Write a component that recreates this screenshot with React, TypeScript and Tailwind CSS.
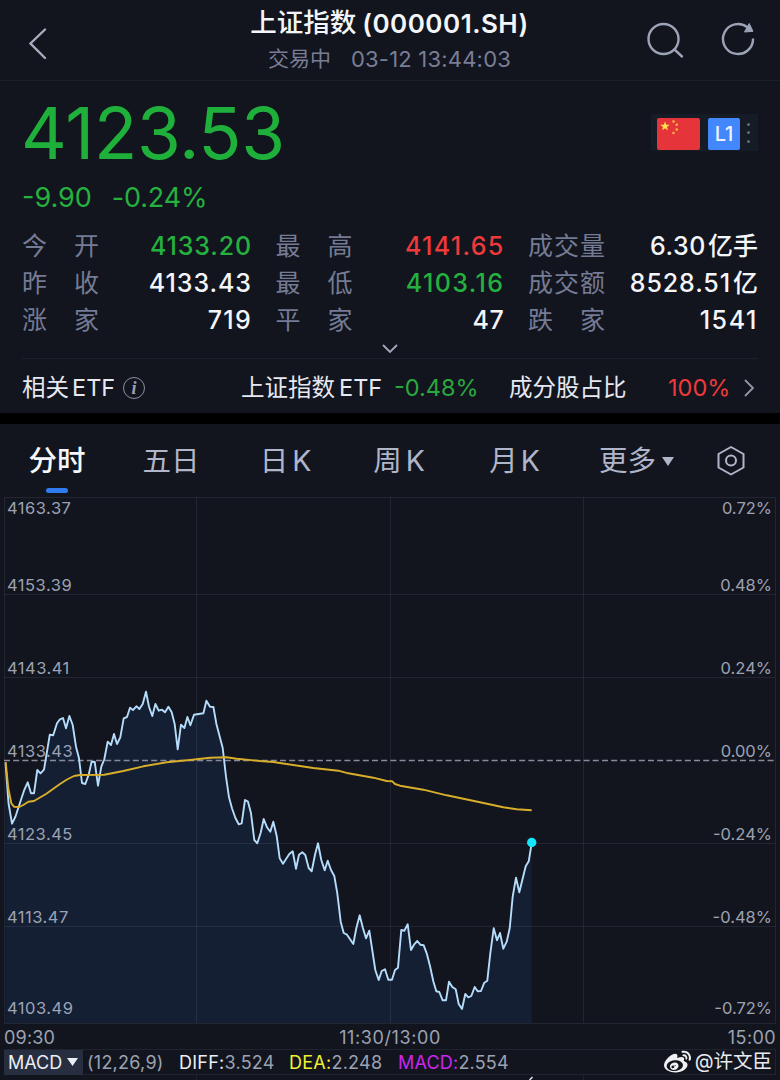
import React from "react";
import { FaWeibo } from "react-icons/fa";

type Stat = { label: string; value: string; unit?: string; color: string };

const stats: Stat[] = [
  { label: "今开", value: "4133.20", color: "text-[#25b13f] tracking-[0.85px]" },
  { label: "最高", value: "4141.65", color: "text-[#ee3a3a] tracking-[1.3px]" },
  { label: "成交量", value: "6.30", unit: "亿手", color: "text-[#f4f5f9] tracking-[0.6px]" },
  { label: "昨收", value: "4133.43", color: "text-[#f4f5f9] tracking-[0.95px]" },
  { label: "最低", value: "4103.16", color: "text-[#25b13f] tracking-[1.4px]" },
  { label: "成交额", value: "8528.51", unit: "亿", color: "text-[#f4f5f9] tracking-[0.9px]" },
  { label: "涨家", value: "719", color: "text-[#f4f5f9] tracking-[1.3px]" },
  { label: "平家", value: "47", color: "text-[#f4f5f9] tracking-[0.6px]" },
  { label: "跌家", value: "1541", color: "text-[#f4f5f9] tracking-[1.6px]" },
];

// Chart coordinates share the page's vertical scale, the viewBox starts at 497
const pricePoints =
  "5.5,762.7 8.5,803 12,823.7 15.5,816.5 19.5,804.3 24,790.7 27.7,782.3 31,793.3 34,793.3 37.3,770 40.5,773.3 44,769.7 49.8,734.7 53.2,735.3 57,723.3 60,719.3 63,718 66,728.3 69.4,716 72.7,725 76,746.7 79,758.3 82,783 85.3,784 88.7,774.7 91.5,762 94.7,761.7 98,785.7 101.3,766.7 104.3,759.3 107.7,741.7 111,745 114,734 117,744 120.3,737.3 123.7,718.3 127,717 130,707.7 133,710 136.4,706.3 139.4,709 142.7,704 146,691.7 149,706.7 152.3,716 155.4,704 158.7,710.7 162,709.7 165,712.3 168.4,706.7 171.7,712.3 174.7,724.3 177.7,749.3 181,724.7 184.4,728 187.4,717 190.4,725.3 194,714.7 203.4,713.3 206.4,700.7 210,706.7 213.4,707 216.4,724 222.7,748 226,776.7 229,797.3 232,808.3 235.3,817.7 238.7,824.3 241.7,823.3 245,800 248,801.7 251,813.3 254.3,840 257.3,843.3 260.7,832.7 263.7,819 267,827.3 270.3,831.7 273.3,821.7 276.7,836 279.7,858.3 283,863.7 289.3,854 292.7,851.3 296,868.7 299,854.7 302.3,852.3 305.3,855 308.7,868 311.7,871.3 315,854.7 318,843.3 321.3,860 324.7,870.3 327.7,860.7 331,870 334.3,876 337.3,893.3 340.7,921.7 343.7,933 347,934.7 353.3,944 356.3,928.3 359.7,915.3 362.7,927.3 366,938.3 369.3,930.7 375.3,970 378.7,980 381.7,971 385,969.3 388.3,979.7 392,979.7 395,970 398,967.7 401.3,930 404.3,930.7 407.7,924.3 411,950 414,944.7 417.3,941 420.3,944.7 423.7,945.3 426.7,953.3 430,966 433.3,981.3 436.3,991.3 439.3,992 442.7,1000.3 446,1000.3 449,981.7 452.3,987 455.7,989.3 458.7,1004 462,1009 465.3,994 468.3,997.3 471.3,996 474.7,987 477.7,991.3 481,991 484.3,982.7 487.3,980.7 490.3,953.3 493.7,928.3 497,940.3 500,933 503.3,948.7 506.7,941.7 509.7,928.3 512.7,896.7 516,877.7 519.3,892.3 525.7,866.3 528.7,861.3 531.7,843";

const averagePoints =
  "5.7,762 8.3,788.3 11.3,803.3 14,806.7 19.3,807 23.3,805 28.3,801.7 34,801 46,794 60,784 67,779.5 74,776 80,775 104.3,774.7 123.3,771 143.3,766.3 166.7,762.3 190,760 210,757.7 226.7,757.3 236.7,758.7 260,761 273.3,762 313.3,768 338.3,770.7 348.3,773.3 373.3,777.7 386.7,781 392.3,781.3 395,784 400,785.7 423.3,789.7 446.7,795.3 480,802.3 503.3,807.3 516.7,809.3 531.7,810.3";

const axisRows = [
  { price: "4153.39", percent: "0.48%", size: "h-[95px]" },
  { price: "4143.41", percent: "0.24%", size: "h-[83px]" },
  { price: "4133.43", percent: "0.00%", size: "h-[83px]" },
  { price: "4123.45", percent: "-0.24%", size: "h-[83px]" },
  { price: "4113.47", percent: "-0.48%", size: "h-[83px]" },
  { price: "4103.49", percent: "-0.72%", size: "h-[91px]" },
];

const Header = () => (
  <header className="flex h-[81px] items-start justify-between border-b border-[#1a1e27] pl-7 pr-6">
    <svg className="mt-7 h-8 w-[105px] shrink-0" viewBox="0 0 105 32" fill="none">
      <path d="M17 1.5 2.5 15.5 17 30" stroke="#a7adbf" strokeWidth="2.4" strokeLinecap="round" />
    </svg>
    <div className="flex flex-col items-center">
      <h1 className="mt-[5px] flex h-9 items-center whitespace-nowrap text-[26.5px] font-medium text-[#f4f5f9]">
        上证指数<span className="ml-[6px] text-[26px] font-semibold tracking-[0.5px]">(000001.SH)</span>
      </h1>
      <p className="mt-[2px] flex h-8 items-center whitespace-nowrap text-[21px] text-[#797e96]">
        交易中<span className="ml-5 text-[22px] tracking-[0.2px]">03-12 13:44:03</span>
      </p>
    </div>
    <div className="mt-5 flex w-[110px] shrink-0 justify-between">
      <svg className="h-10 w-10" viewBox="0 0 40 40" fill="none" stroke="#9da3b6" strokeWidth="2.4">
        <circle cx="17.500" cy="19" r="15" />
        <path d="m28.500 29.500 7.500 7" strokeLinecap="round" />
      </svg>
      <svg className="h-10 w-9" viewBox="0 0 36 40" fill="none" stroke="#9da3b6" strokeWidth="2.400">
        <path d="M33 18.500a15 15 0 1 1-5.500-11.100" />
        <path d="M29.200 3.500 33 11.300l-8.500.700z" fill="#9da3b6" strokeWidth="1" strokeLinejoin="round" />
      </svg>
    </div>
  </header>
);

const Quote = () => (
  <section className="flex h-[332px] flex-col pl-[22px] pr-[22px]">
    <div className="flex h-[95px] items-start justify-between">
      <div className="mt-[11px] -ml-px text-[71px] leading-[82px] tracking-[-0.2px] text-[#1fb03b]">4123.53</div>
      <div className="mt-[33px] flex h-[37px] w-[107px] items-center bg-[#151c25] pl-[6px] pt-[2px]">
        <svg className="h-8 w-[43px]" viewBox="0 0 43 32">
          <rect width="43" height="32" rx="2" fill="#e5353a" />
          <path d="m8 3.500 1.200 3.300h3.500L9.900 8.900l1 3.400L8 10.300l-2.900 2 1-3.400-2.800-2.100h3.500z" fill="#ffe54a" />
          <g fill="#f5c03c">
            <circle cx="16.500" cy="3.500" r="1.200" />
            <circle cx="19.700" cy="6.700" r="1.200" />
            <circle cx="19.700" cy="11.500" r="1.200" />
            <circle cx="16.500" cy="15" r="1.200" />
          </g>
        </svg>
        <span className="ml-2 flex h-8 w-8 items-center justify-center rounded-[2px] bg-[#4287fb] text-[20px] font-medium text-[#eef3ff]">
          L1
        </span>
        <span className="ml-[7px] flex h-[22px] flex-col justify-between pb-[2px]">
          <i className="h-[3px] w-[3px] rounded-full bg-[#656b77]" />
          <i className="h-[3px] w-[3px] rounded-full bg-[#656b77]" />
          <i className="h-[3px] w-[3px] rounded-full bg-[#656b77]" />
        </span>
      </div>
    </div>
    <div className="flex h-[52px] items-start gap-[20px] pt-[5px] text-[27px] leading-[34px] text-[#25b13f]">
      <span>-9.90</span>
      <span className="tracking-[-0.2px]">-0.24%</span>
    </div>
    <div className="grid grid-cols-[230px_229px_230px] gap-x-[23.500px] whitespace-nowrap">
      {stats.map((s) => (
        <div key={s.label} className="flex h-[37px] items-center justify-between pt-px">
          <span className="flex w-[77px] justify-between text-[25px] text-[#757b94]">
            {s.label.split("").map((c) => (
              <span key={c}>{c}</span>
            ))}
          </span>
          <span className={`flex text-[25px] font-[550] ${s.color}`}>
            {s.value}
            {s.unit && <span className="ml-[2px] font-medium tracking-normal">{s.unit}</span>}
          </span>
        </div>
      ))}
    </div>
    <div className="flex h-[20px] shrink-0 justify-center border-b border-[#1c202b]">
      <svg className="mt-1 h-[11px] w-[18px]" viewBox="0 0 18 11" fill="none">
        <path d="m2 2 7 7 7-7" stroke="#a3a9ba" strokeWidth="1.800" />
      </svg>
    </div>
    <div className="flex h-[54px] shrink-0 items-center whitespace-nowrap pt-[3px] text-[23.500px] text-[#e6e8f2]">
      <span className="w-[94px]">相关<span className="ml-[3px]">ETF</span></span>
      <span className="ml-[7px] flex h-[22px] w-[22px] items-center justify-center rounded-full border-[1.500px] border-[#8b90a2] font-['Liberation_Serif'] text-[18px] font-bold italic leading-none text-[#9da2b3]">
        i
      </span>
      <span className="ml-[96px] w-[142px]">上证指数<span className="ml-1">ETF</span></span>
      <span className="ml-[11px] w-[84px] text-[#2aa83f]">-0.48%</span>
      <span className="ml-[31px] w-[119px]">成分股占比</span>
      <span className="ml-[40px] w-[63px] text-[#ee3a3a]">100%</span>
      <svg className="ml-[12px] h-5 w-3 shrink-0" viewBox="0 0 12 20" fill="none">
        <path d="m2 2 8 8-8 8" stroke="#9297a7" strokeWidth="1.800" />
      </svg>
    </div>
  </section>
);

const Tabs = () => (
  <nav className="flex h-[73px] items-start whitespace-nowrap pt-4 text-[28.500px] text-[#b0b5c9]">
    <div className="flex w-[114px] flex-col items-center">
      <span className="h-[42px] font-medium leading-[42px] text-[#f6f7fb]">分时</span>
      <span className="mt-[6px] h-[5px] w-[22px] rounded-full bg-[#2f7bf0]" />
    </div>
    <span className="w-[114px] text-center leading-[42px]">五日</span>
    <span className="w-[115px] text-center leading-[42px]">日<span className="ml-1">K</span></span>
    <span className="w-[112px] text-center leading-[42px]">周<span className="ml-1">K</span></span>
    <span className="w-[119px] text-center leading-[42px]">月<span className="ml-[3px]">K</span></span>
    <span className="ml-[25px] flex w-[76px] items-center gap-[6px] leading-[42px]">
      更多
      <svg className="h-[9px] w-3 shrink-0" viewBox="0 0 12 9">
        <path d="M0 0h12L6 9z" fill="#b0b5c9" />
      </svg>
    </span>
    <svg className="ml-[42px] mt-[5px] h-8 w-7" viewBox="0 0 28 32" fill="none" stroke="#b0b5c9" strokeWidth="2" strokeLinejoin="round">
      <path d="M14 2 26.500 9v13.500L14 29.500 1.500 22.500V9z" />
      <circle cx="14" cy="15.500" r="5" />
    </svg>
  </nav>
);

const Chart = () => (
  <section className="relative h-[527px]">
    <svg className="block h-[527px] w-full" viewBox="0 497 780 527" fill="none">
      <polygon points={`5.5,1023 ${pricePoints} 531.7,1023`} fill="#141f34" />
      <path
        d="M4.500 497.500H775.500V1023.500H4.500zM4 594.500H775M4 677.500H775M4 843.500H775M4 926.500H775M196.500 497V1023M390.500 497V1023M583.500 497V1023"
        stroke="#9aa6c8"
        strokeOpacity="0.120"
      />
      <path d="M4 760.500H775" stroke="#878b9b" strokeWidth="1.500" strokeDasharray="6 3.200" />
    </svg>
    {/* axis labels sit between the grid and the lines */}
    <div className="absolute inset-0 text-[16.500px] leading-[18px] text-[#9da2b3]">
      <div className="flex h-0 justify-between pl-[7px] pr-2 pt-[2px]">
        <span className="tracking-[0.5px]">4163.37</span>
        <span>0.72%</span>
      </div>
      {axisRows.map((r) => (
        <div key={r.price} className={`flex items-end justify-between pl-[7px] pr-2 ${r.size}`}>
          <span className="tracking-[0.5px]">{r.price}</span>
          <span>{r.percent}</span>
        </div>
      ))}
    </div>
    <svg className="absolute inset-0 h-[527px] w-full" viewBox="0 497 780 527" fill="none" strokeLinejoin="round">
      <polyline points={pricePoints} stroke="#b5dcfb" strokeWidth="1.900" />
      <polyline points={averagePoints} stroke="#d8ae2b" strokeWidth="1.900" />
      <circle cx="531.700" cy="842.500" r="4.700" fill="#14e6fb" />
    </svg>
  </section>
);

const Footer = () => (
  <footer className="text-[18px] text-[#9ca2b2]">
    <div className="flex h-[25px] items-center justify-between pl-1 pr-1 pt-[2px]">
      <span className="w-[120px] tracking-[0.2px]">09:30</span>
      <span className="tracking-[0.6px]">11:30/13:00</span>
      <span className="w-[120px] text-right tracking-[0.4px]">15:00</span>
    </div>
    <div className="ml-1 mr-1 flex h-[26px] items-center whitespace-nowrap border border-[#1f232e]">
      <span className="-ml-px flex h-[25px] w-[79px] items-center bg-[#272e3f] pl-1 text-[#eceef6]">
        MACD
        <svg className="ml-[5px] h-2 w-[11px]" viewBox="0 0 11 8">
          <path d="M0 0h11L5.500 8z" fill="#eceef6" />
        </svg>
      </span>
      <span className="ml-[4px] w-[77px] tracking-[0.25px]">(12,26,9)</span>
      <span className="ml-[15px] w-[95px] tracking-[0.25px]"><b className="font-normal text-[#eceef6]">DIFF:</b>3.524</span>
      <span className="ml-[15px] w-[93px] tracking-[0.25px]"><b className="font-normal text-[#f0f032]">DEA:</b>2.248</span>
      <span className="ml-[16px] w-[110px] tracking-[0.2px]"><b className="font-normal text-[#cd25ef]">MACD:</b>2.554</span>
      <FaWeibo className="ml-auto h-[27px] w-[27px] text-[#f1f1f3]" />
      <span className="ml-[4px] mr-[3px] text-[19.500px] text-[#e9eaef]">@许文臣</span>
    </div>
    <svg className="block h-[5px] w-full" viewBox="0 0 780 5" fill="none">
      <path d="M196.500 0v5M583.500 0v5" stroke="#1f232e" />
      <path d="m529.500 5 3-3" stroke="#e8eaf0" strokeWidth="1.500" />
    </svg>
  </footer>
);

export default function App() {
  return (
    <main className="h-[1080px] w-[780px] overflow-hidden bg-[#12151e] font-['Inter','Noto_Sans_CJK_SC',sans-serif]">
      <Header />
      <Quote />
      <div className="h-[11px] bg-black" />
      <Tabs />
      <Chart />
      <Footer />
    </main>
  );
}
